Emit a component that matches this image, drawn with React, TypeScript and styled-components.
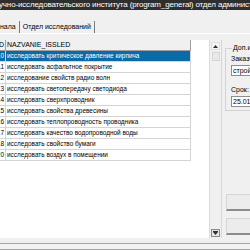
import React from "react";
import styled, { createGlobalStyle } from "styled-components";

const Global = createGlobalStyle`
  html, body { margin: 0; padding: 0; background: #f0f0f0; }
  body { font-family: "Liberation Sans", Arial, sans-serif; }
`;

const Window = styled.div`
  width: 250px;
  height: 250px;
  overflow: hidden;
  display: flex;
  flex-direction: column;
  background: #f0f0f0;
`;

const TitleBar = styled.div`
  height: 10px;
  flex: none;
  background: #2e2e2e;
  color: #ffffff;
  font-size: 8px;
  letter-spacing: -0.15px;
  line-height: 10px;
  white-space: nowrap;
  overflow: hidden;
  margin-left: -1px;
`;

const TabStrip = styled.div`
  flex: none;
  margin-top: 7px;
  height: 16px;
  display: flex;
  align-items: stretch;
  border-bottom: 1px solid #ffffff;
`;

const Tab = styled.div<{ $first?: boolean }>`
  display: flex;
  align-items: center;
  padding: 0 3px 1px ${(p) => (p.$first ? "0" : "3px")};
  font-size: 7px;
  color: #000;
  white-space: nowrap;
  border-right: 1px solid #7a7a7a;
  margin-top: 4px;
`;

const Body = styled.div`
  flex: none;
  margin-top: 6px;
  height: 198px;
  display: flex;
`;

const Grid = styled.div`
  width: 209px;
  background: #ffffff;
  display: flex;
  flex-direction: column;
  overflow: hidden;
`;

const Row = styled.div`
  display: flex;
  height: 11px;
  width: 191px;
`;

const Cell = styled.div<{ $w: number; $sel?: boolean; $head?: boolean }>`
  width: ${(p) => p.$w}px;
  flex: none;
  box-sizing: border-box;
  height: 11px;
  line-height: 10px;
  font-size: ${(p) => (p.$head ? "7px" : "6.45px")};
  white-space: nowrap;
  overflow: hidden;
  padding-left: 1px;
  border-right: 1px solid ${(p) => (p.$head ? "#a0a0a0" : "#d4d4d4")};
  border-bottom: 1px solid ${(p) => (p.$head ? "#a0a0a0" : "#d4d4d4")};
  background: ${(p) => (p.$sel ? "#0b6aa8" : p.$head ? "#f0f0f0" : "#ffffff")};
  color: ${(p) => (p.$sel ? "#ffffff" : "#000000")};
`;

const IdCell = styled(Cell)`
  padding: 0 1px 0 0;
  display: flex;
  justify-content: flex-end;
`;

const ScrollBar = styled.div`
  width: 12px;
  flex: none;
  box-sizing: border-box;
  border-left: 1px solid #dcdcdc;
  background: #f0f0f0;
  display: flex;
  flex-direction: column;
  align-items: center;
  padding: 2px 0 1px 0;
`;

const ScrollBtn = styled.div<{ $focus?: boolean }>`
  width: 9px;
  height: 8px;
  box-sizing: border-box;
  border: 1px solid ${(p) => (p.$focus ? "#8a8a8a" : "#e0e0e0")};
  background: ${(p) => (p.$focus ? "#e6e6e6" : "#f4f4f4")};
  display: flex;
  align-items: center;
  justify-content: center;
`;

const Thumb = styled.div`
  width: 8px;
  height: 9px;
  margin-top: 2px;
  background: #e8e8e8;
  border: 1px solid #d6d6d6;
  box-sizing: border-box;
`;

const Spacer = styled.div`
  flex: 1;
`;

const SidePanel = styled.div`
  flex: 1;
  box-sizing: border-box;
  border-left: 1px solid #d6d6d6;
  padding: 4px 0 0 3px;
  display: flex;
  flex-direction: column;
  overflow: hidden;
`;

const GroupBox = styled.fieldset`
  margin: 0;
  padding: 0 0 0 5px;
  border: 1px solid #d2d2d2;
  border-right: none;
  height: 67px;
  box-sizing: border-box;
  font-size: 7px;
  min-width: 0;
`;

const Legend = styled.legend`
  padding: 0 1px;
  margin-left: 1px;
  font-size: 7px;
  line-height: 8px;
  white-space: nowrap;
`;

const FieldLabel = styled.div`
  font-size: 7px;
  line-height: 8px;
  margin-top: 3px;
  white-space: nowrap;
`;

const Input = styled.div`
  margin-top: 2px;
  height: 11px;
  box-sizing: border-box;
  border: 1px solid #8e8e8e;
  border-right: none;
  background: #ffffff;
  font-size: 7px;
  line-height: 9px;
  padding-left: 1px;
  white-space: nowrap;
  overflow: hidden;
`;

const SecondLabel = styled(FieldLabel)`
  margin-top: 10px;
`;

const Button = styled.div`
  height: 17px;
  box-sizing: border-box;
  border: 1px solid #d6d6d6;
  border-right: none;
  border-bottom: 2px solid #8c8c8c;
  background: #ececec;
  margin-left: 1px;
`;

const ButtonStack = styled.div`
  margin-top: auto;
  display: flex;
  flex-direction: column;
  gap: 7px;
  padding-bottom: 3px;
`;

const Footer = styled.div`
  flex: none;
  height: 12px;
  box-sizing: border-box;
  padding-top: 5px;
  border-bottom: 1px solid #a6a6a6;
  background: #f0f0f0;
`;

const FooterInner = styled.div`
  height: 6px;
  box-sizing: border-box;
  border-top: 1px solid #a6a6a6;
  background: #f2f2f2;
`;

const rows = [
  "исследовать критическое давление кирпича",
  "исследовать асфальтное покрытие",
  "исследование свойств радио волн",
  "исследовать светопередачу светодиода",
  "исследовать сверхпроводник",
  "исследовать свойства древесины",
  "исследовать теплопроводность проводника",
  "исследовать качество водопроводной воды",
  "исследовать свойство бумаги",
  "исследовать воздух в помещении",
];

const ids = ["10", "11", "12", "13", "14", "15", "16", "17", "18", "20"];

const Up = () => (
  <svg width="5" height="3" viewBox="0 0 5 3">
    <path d="M0 3 L2.5 0 L5 3 Z" fill="#303030" />
  </svg>
);
const Down = () => (
  <svg width="5" height="4" viewBox="0 0 5 4">
    <rect x="0" y="0" width="5" height="1" fill="#303030" />
    <path d="M0 1 L2.5 4 L5 1 Z" fill="#303030" />
  </svg>
);

export default function App() {
  return (
    <Window>
      <Global />
      <TitleBar>
        учно-исследовательского института (program_general) отдел администрирования
      </TitleBar>
      <TabStrip>
        <Tab $first>нала</Tab>
        <Tab>Отдел исследований</Tab>
      </TabStrip>
      <Body>
        <Grid>
          <Row>
            <IdCell $w={6} $head>ID</IdCell>
            <Cell $w={185} $head>NAZVANIE_ISSLED</Cell>
          </Row>
          {rows.map((r, i) => (
            <Row key={i}>
              <IdCell $w={6} $sel={i === 0}>{ids[i]}</IdCell>
              <Cell $w={185} $sel={i === 0}>{r}</Cell>
            </Row>
          ))}
        </Grid>
        <ScrollBar>
          <ScrollBtn><Up /></ScrollBtn>
          <Thumb />
          <Spacer />
          <ScrollBtn $focus><Down /></ScrollBtn>
        </ScrollBar>
        <SidePanel>
          <GroupBox>
            <Legend>Доп.информация</Legend>
            <FieldLabel>Заказчик:</FieldLabel>
            <Input>стройтрест</Input>
            <SecondLabel>Срок:</SecondLabel>
            <Input>25.01.2017</Input>
          </GroupBox>
          <ButtonStack>
            <Button />
            <Button />
          </ButtonStack>
        </SidePanel>
      </Body>
      <Footer>
        <FooterInner />
      </Footer>
    </Window>
  );
}
